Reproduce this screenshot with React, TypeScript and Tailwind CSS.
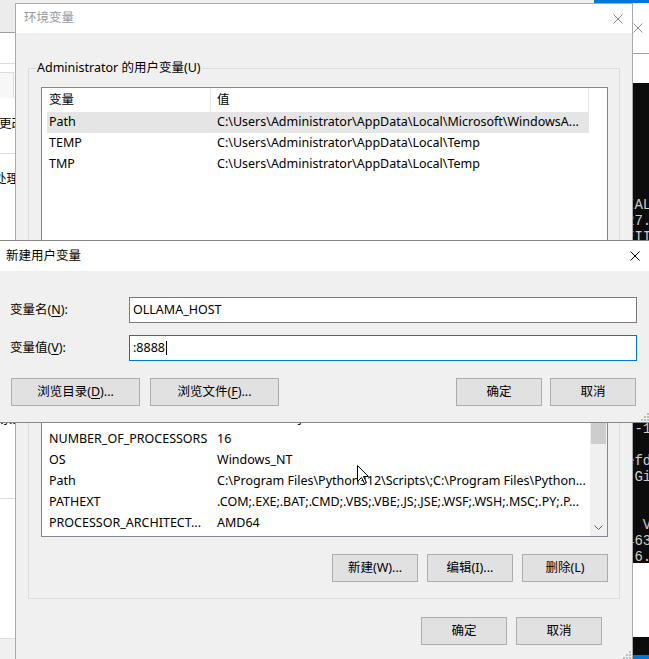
import React from "react";

type Row = { name: string; value: string; selected?: boolean };

const userVars: Row[] = [
  { name: "Path", value: "C:\\Users\\Administrator\\AppData\\Local\\Microsoft\\WindowsA...", selected: true },
  { name: "TEMP", value: "C:\\Users\\Administrator\\AppData\\Local\\Temp" },
  { name: "TMP", value: "C:\\Users\\Administrator\\AppData\\Local\\Temp" },
];

const sysVars: Row[] = [
  { name: "ComSpec", value: "C:\\Windows\\system32\\cmd.exe" },
  { name: "DriverData", value: "C:\\Windows\\System32\\Drivers\\DriverData" },
  { name: "NUMBER_OF_PROCESSORS", value: "16" },
  { name: "OS", value: "Windows_NT" },
  { name: "Path", value: "C:\\Program Files\\Python312\\Scripts\\;C:\\Program Files\\Python..." },
  { name: "PATHEXT", value: ".COM;.EXE;.BAT;.CMD;.VBS;.VBE;.JS;.JSE;.WSF;.WSH;.MSC;.PY;.P..." },
  { name: "PROCESSOR_ARCHITECT...", value: "AMD64" },
];

// console lines peeking out on the right edge (16px each, from y=197)
const consoleLines = ["IAL", "27.", "EII", "", "", "", "", "", "", "", "", "", "", "", "[-1", "", "efd", " Gi", "", "", ": V", "463", " 6."];

function Btn({ children, className = "" }: { children: React.ReactNode; className?: string }) {
  return (
    <div className={`flex h-[28px] items-center justify-center border border-[#adadad] bg-[#e1e1e1] ${className}`}>
      {children}
    </div>
  );
}

function CloseX({ color }: { color: string }) {
  return (
    <svg width="10" height="10" viewBox="0 0 10 10" fill="none" stroke={color} strokeWidth="1">
      <path d="M0.5 0.5 L9.5 9.5 M9.5 0.5 L0.5 9.5" />
    </svg>
  );
}

function Grip() {
  return (
    <svg width="8" height="8" viewBox="0 0 8 8" fill="#bcbcbc">
      <rect x="6" y="0" width="2" height="2" />
      <rect x="3" y="3" width="2" height="2" />
      <rect x="6" y="3" width="2" height="2" />
      <rect x="0" y="6" width="2" height="2" />
      <rect x="3" y="6" width="2" height="2" />
      <rect x="6" y="6" width="2" height="2" />
    </svg>
  );
}

function ListRow({ row }: { row: Row }) {
  return (
    <div className={`ml-[5px] flex h-[21px] w-[542px] shrink-0 items-center whitespace-nowrap ${row.selected ? "bg-[#e5e5e5]" : ""}`}>
      <div className="w-[164px] overflow-hidden pl-[2px]">{row.name}</div>
      <div className="w-[378px] overflow-hidden pl-[6px]">{row.value}</div>
    </div>
  );
}

function ListHeader() {
  return (
    <div className="flex h-[24px] shrink-0 bg-white">
      <div className="flex w-[169px] items-center border-r border-[#e5e5e5] pl-[7px]">变量</div>
      <div className="flex w-[378px] items-center border-r border-[#e5e5e5] pl-[6px]">值</div>
    </div>
  );
}

function GroupBox({ label, children, className = "" }: { label: string; children: React.ReactNode; className?: string }) {
  return (
    <div className={`relative border border-[#dcdcdc] pl-[12px] pr-[11px] pt-[18px] ${className}`}>
      <span className="absolute left-[7px] top-[-9px] bg-[#f0f0f0] px-[1px] leading-[16px]">{label}</span>
      {children}
    </div>
  );
}

function EnvDialog() {
  return (
    <div className="absolute left-[15px] top-[3px] flex h-[658px] w-[618px] flex-col border border-[#aaaaaa] bg-[#f0f0f0]">
      <div className="flex h-[29px] shrink-0 items-center justify-between bg-white pl-[8px] pr-[9px]">
        <span className="text-[#999999]">环境变量</span>
        <CloseX color="#8a8a8a" />
      </div>

      <div className="flex flex-col px-[12px] pt-[35px]">
        <GroupBox label="Administrator 的用户变量(U)" className="pb-[14px]">
          <div className="flex h-[190px] flex-col border border-[#828790] bg-white">
            <ListHeader />
            {userVars.map((r) => (
              <ListRow key={r.name} row={r} />
            ))}
          </div>
          <div className="mt-[10px] flex justify-end gap-[9px]">
            <Btn className="h-[27px] w-[86px]">新建(N)...</Btn>
            <Btn className="h-[27px] w-[86px]">编辑(E)...</Btn>
            <Btn className="h-[27px] w-[86px]">删除(D)</Btn>
          </div>
        </GroupBox>

        <GroupBox label="系统变量(S)" className="mt-[13px] pb-[16px]">
          <div className="flex h-[175px] border border-[#828790] bg-white">
            <div className="flex w-[548px] flex-col">
              <ListHeader />
              <div className="flex flex-1 flex-col overflow-hidden">
                {sysVars.map((r) => (
                  <ListRow key={r.name} row={r} />
                ))}
              </div>
            </div>
            <div className="flex w-[17px] flex-col bg-[#f0f0f0]">
              <div className="flex h-[17px] items-center justify-center">
                <svg width="9" height="5" viewBox="0 0 9 5" fill="none" stroke="#606060">
                  <path d="M0.5 4.5 L4.5 0.5 L8.5 4.5" />
                </svg>
              </div>
              <div className="mx-[1px] h-[64px] bg-[#cdcdcd]" />
              <div className="flex-1" />
              <div className="flex h-[17px] items-center justify-center">
                <svg width="9" height="5" viewBox="0 0 9 5" fill="none" stroke="#606060">
                  <path d="M0.5 0.5 L4.5 4.5 L8.5 0.5" />
                </svg>
              </div>
            </div>
          </div>
          <div className="mt-[17px] flex justify-end gap-[9px]">
            <Btn className="w-[86px]">新建(W)...</Btn>
            <Btn className="w-[86px]">编辑(I)...</Btn>
            <Btn className="w-[86px]">删除(L)</Btn>
          </div>
        </GroupBox>

        <div className="mt-[18px] flex justify-end gap-[9px] pr-[18px]">
          <Btn className="w-[86px]">确定</Btn>
          <Btn className="w-[86px]">取消</Btn>
        </div>
      </div>

      <div className="absolute bottom-[1px] right-[1px]">
        <Grip />
      </div>
    </div>
  );
}

function NewVarDialog() {
  return (
    <div className="absolute left-[-1px] top-[240px] flex h-[183px] w-[652px] flex-col border border-[#888888] bg-[#f0f0f0]">
      <div className="flex h-[30px] shrink-0 items-center justify-between bg-white pl-[6px] pr-[10px]">
        <span>新建用户变量</span>
        <CloseX color="#000000" />
      </div>

      <div className="flex flex-1 flex-col pl-[10px] pr-[13px] pt-[26px]">
        <div className="flex h-[26px] items-center">
          <span className="w-[119px]">
            变量名(<u className="underline-offset-2">N</u>):
          </span>
          <div className="flex h-[26px] flex-1 items-center border border-[#7a7a7a] bg-white pl-[3px]">OLLAMA_HOST</div>
        </div>
        <div className="mt-[12px] flex h-[26px] items-center">
          <span className="w-[119px]">
            变量值(<u className="underline-offset-2">V</u>):
          </span>
          <div className="flex h-[26px] flex-1 items-center border border-[#0078d7] bg-white pl-[3px]">
            :8888
            <span className="ml-[1px] h-[14px] w-[1px] bg-black" />
          </div>
        </div>

        <div className="mt-[17px] flex px-[1px]">
          <Btn className="w-[129px]">
            浏览目录(<u className="underline-offset-2">D</u>)...
          </Btn>
          <Btn className="ml-[10px] w-[129px]">
            浏览文件(<u className="underline-offset-2">F</u>)...
          </Btn>
          <div className="flex-1" />
          <Btn className="w-[86px]">确定</Btn>
          <Btn className="ml-[8px] w-[86px]">取消</Btn>
        </div>
      </div>

      <div className="absolute bottom-[1px] right-[1px]">
        <Grip />
      </div>
    </div>
  );
}

export default function App() {
  return (
    <div className="relative h-[659px] w-[649px] overflow-hidden bg-[#f0f0f0] text-[12.5px] text-black font-['Noto_Sans','Noto_Sans_CJK_SC',sans-serif]">
      {/* system properties window behind, left edge */}
      <div className="absolute left-0 top-0 flex h-[659px] w-[15px] flex-col overflow-hidden whitespace-nowrap bg-white leading-[16px]">
        <div className="h-[32px] shrink-0 bg-[#ececec]" />
        <div className="h-[1px] shrink-0 bg-[#a0a0a0]" />
        <div className="h-[30px] shrink-0" />
        <div className="h-[35px] shrink-0 border-t border-[#dcdcdc]">
          <div className="mt-[8px] h-[26px] w-[14px] border-r border-t border-[#dcdcdc] bg-[#f7f7f7]" />
        </div>
        <div className="h-[55px] shrink-0 pt-[18px]">
          <span className="ml-[-1px]">更改</span>
        </div>
        <div className="h-[1px] shrink-0 bg-[#dcdcdc]" />
        <div className="h-[258px] shrink-0 pt-[17px]">
          <span className="ml-[-6px] inline-block">处理</span>
        </div>
        <div className="h-[86px] shrink-0">系统</div>
        <div className="h-[1px] shrink-0 bg-[#dcdcdc]" />
        <div className="h-[139px] shrink-0" />
        <div className="h-[1px] shrink-0 bg-[#dcdcdc]" />
        <div className="flex-1 bg-[#f0f0f0]" />
      </div>

      {/* blue strip of the active window at top right */}
      <div className="absolute left-[594px] top-0 h-[3px] w-[55px] bg-[#0078d7]" />

      {/* console / other windows behind, right edge */}
      <div className="absolute left-[632px] top-[3px] flex h-[656px] w-[17px] flex-col overflow-hidden">
        <div className="flex h-[50px] shrink-0 items-center bg-white pl-[1px]">
          <CloseX color="#8a8a8a" />
        </div>
        <div className="h-[1px] shrink-0 bg-[#a0a0a0]" />
        <div className="h-[29px] shrink-0 bg-white" />
        <div className="h-[480px] shrink-0 overflow-hidden bg-[#0c0c0c] pt-[114px] font-['Liberation_Mono',monospace] text-[14px] leading-[16px] text-[#cccccc]">
          {consoleLines.map((l, i) => (
            <div key={i} className="ml-[-6px] h-[16px] whitespace-pre">
              {l}
            </div>
          ))}
        </div>
        <div className="h-[74px] shrink-0 bg-white" />
        <div className="h-[18px] shrink-0 bg-[#0c0c0c]" />
        <div className="flex-1 bg-[#0078d7]" />
      </div>

      <EnvDialog />
      <NewVarDialog />

      {/* mouse pointer */}
      <svg className="pointer-events-none absolute left-[357px] top-[465px]" width="13" height="20" viewBox="0 0 13 20">
        <path d="M0.5 0.5 L0.5 16.5 L4.5 12.5 L7.5 18.5 L9.5 17.5 L6.5 11.5 L11.5 11.5 Z" fill="#ffffff" stroke="#000000" strokeWidth="1" />
      </svg>
    </div>
  );
}
